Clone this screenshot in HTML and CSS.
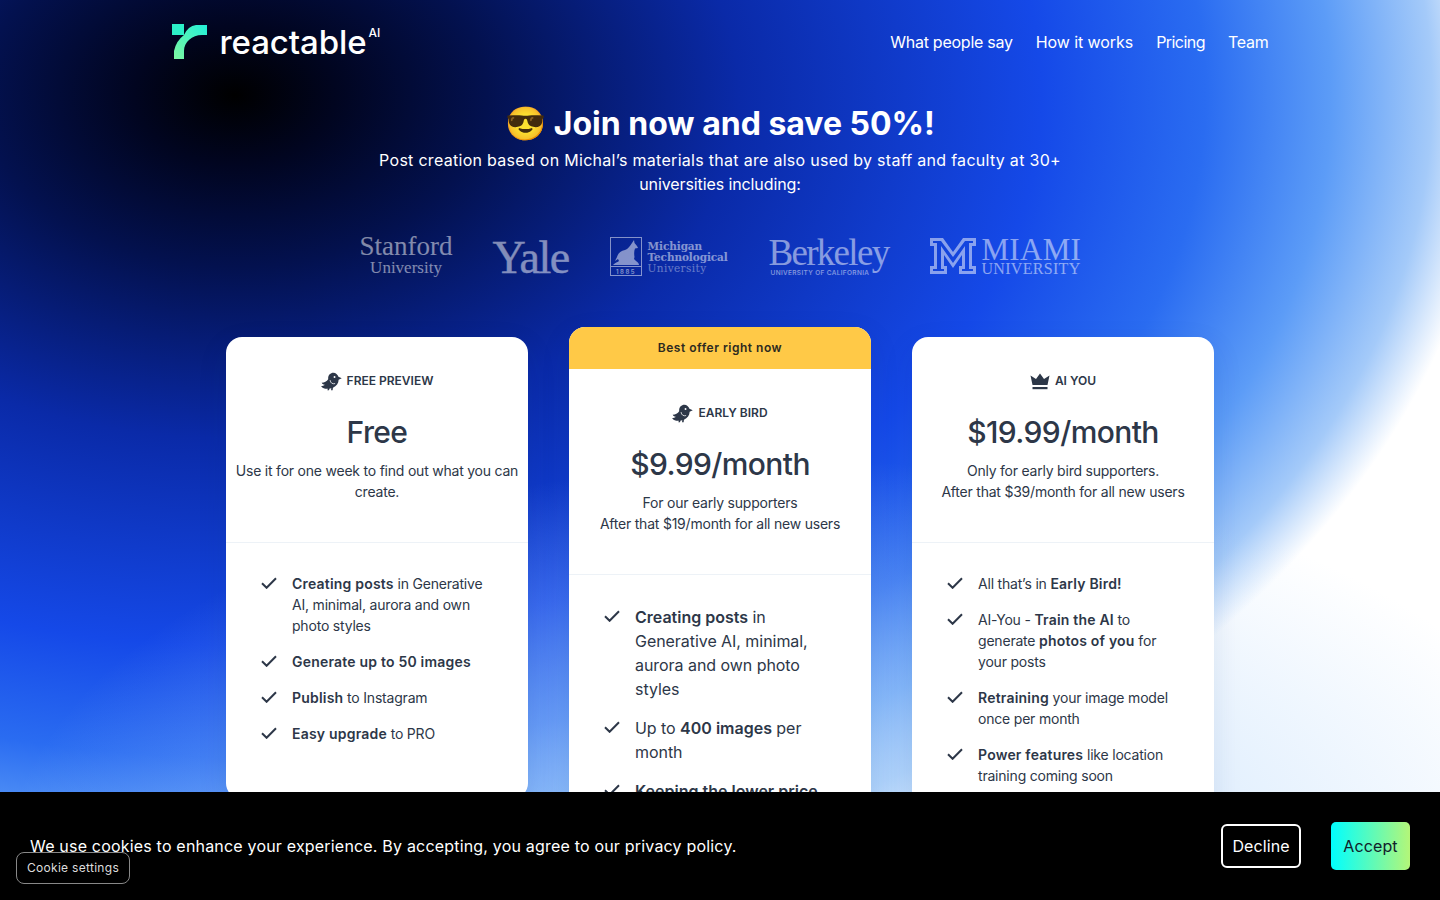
FILE: index.html
```html
<!DOCTYPE html>
<html lang="en">
<head>
<meta charset="utf-8">
<title>reactable AI</title>
<link rel="stylesheet" href="styles.css">
</head>
<body>
<svg class="defs" width="0" height="0" aria-hidden="true">
  <defs>
    <linearGradient id="logoGrad" x1="0" y1="1" x2="1" y2="0">
      <stop offset="0" stop-color="#7df7a0"/>
      <stop offset="1" stop-color="#22f0d8"/>
    </linearGradient>
    <symbol id="bird" viewBox="0 0 22 20">
      <path d="M21.800 6.600 18.300 5C17.600 2.600 15.400 .8 13 .8 9.900 .8 7.500 3.300 7.500 6.300V7.500C6 10 3.200 11.300 .6 11.200 1.500 12.600 2.800 13.300 4.200 13.500 3 14.500 1.500 15 0 15 1.800 17.200 4.500 18 7.200 17.700L6.600 19.200H8.300L9 17.400 10.800 17.100 10.500 19.200H12.200L12.500 16.500C16.200 15 18.500 12 18.500 8.200Z"/>
      <path d="M9.500 8.500C9.800 11.500 12 13 14.800 12.200" fill="none" stroke="#fff" stroke-width=".8"/>
      <circle cx="14.200" cy="5.200" r="1" fill="#fff"/>
    </symbol>
    <symbol id="crown" viewBox="0 0 20 17">
      <path d="M10 .5 14 6 19.500 2.500 17.500 12H2.500L.5 2.500 6 6 10 .5Z"/>
      <rect x="2.500" y="14" width="15" height="2.200"/>
    </symbol>
    <symbol id="check" viewBox="0 0 16 12">
      <path d="M1 6.200 5.600 10.800 15 1.200" fill="none" stroke="currentColor" stroke-width="2"/>
    </symbol>
  </defs>
</svg>

<div class="page">
  <header class="topbar">
    <a class="brand" href="#">
      <svg class="brand-mark" viewBox="0 0 36 36" aria-hidden="true">
        <rect x="0" y="0" width="12" height="11" fill="#2cf0c8"/>
        <path d="M35 1H24Q16 2 12 11 4 17 2 27V35H12V27C12 18 20 11 30 11H35Z" fill="url(#logoGrad)"/>
      </svg>
      <span class="brand-name">reactable</span><sup class="brand-ai">AI</sup>
    </a>
    <nav class="nav">
      <a href="#">What people say</a>
      <a href="#">How it works</a>
      <a href="#">Pricing</a>
      <a href="#">Team</a>
    </nav>
  </header>

  <section class="hero">
    <h1><span class="emoji">😎</span> Join now and save 50%!</h1>
    <p>Post creation based on Michal’s materials that are also used by staff and faculty at 30+ <span class="sub-end">universities including:</span></p>
  </section>

  <section class="unis">
    <div class="uni stanford"><span class="s1">Stanford</span><span class="s2">University</span></div>
    <div class="uni yale">Yale</div>
    <div class="uni mtu">
      <svg class="mtu-mark" viewBox="0 0 32 39" aria-hidden="true">
        <rect x=".5" y=".5" width="31" height="38" fill="none" stroke="currentColor"/>
        <line x1=".5" y1="29.500" x2="31.500" y2="29.500" stroke="currentColor"/>
        <path d="M3 28C6 25 8 25 9 24L8 22 5 24 7 20C8 16 11 14 15 13 18 12 20 9 22 6L24 3 24.500 6 27 9 28 11 25 11.500C24 14 24 17 24.500 20L24 22 26 24C28 25 29 27 29 28Z" fill="currentColor"/>
        <text class="mtu-year" x="16" y="36.500" text-anchor="middle" fill="currentColor">1885</text>
      </svg>
      <div class="mtu-text"><span class="m1">Michigan</span><span class="m1">Technological</span><span class="m2">University</span></div>
    </div>
    <div class="uni berkeley"><span class="b1">Berkeley</span><span class="b2">UNIVERSITY OF CALIFORNIA</span></div>
    <div class="uni miami">
      <svg class="miami-mark" viewBox="0 0 46 36" aria-hidden="true">
        <path fill-rule="evenodd" d="M0 0H13L23 14 33 0H46V8H42V28H46V36H29V28H32V17L23 30 14 17V28H17V36H0V28H4V8H0ZM3 3V5H7V31H3V33H14V31H11V8L23 25 35 8V31H32V33H43V31H39V5H43V3H35L23 19 11 3Z"/>
      </svg>
      <div class="miami-text"><span class="mi1">MIAMI</span><span class="mi2">UNIVERSITY</span></div>
    </div>
  </section>

  <section class="plans">
    <article class="card card-side card-free">
      <div class="card-head">
        <div class="tier"><svg class="tier-icon"><use href="#bird"/></svg>FREE PREVIEW</div>
        <h2>Free</h2>
        <p>Use it for one week to find out what you can create.</p>
      </div>
      <ul class="features">
        <li><svg class="tick"><use href="#check"/></svg><span><b>Creating posts</b> in Generative AI, minimal, aurora and own photo styles</span></li>
        <li><svg class="tick"><use href="#check"/></svg><span><b>Generate up to 50 images</b></span></li>
        <li><svg class="tick"><use href="#check"/></svg><span><b>Publish</b> to Instagram</span></li>
        <li><svg class="tick"><use href="#check"/></svg><span><b>Easy upgrade</b> to PRO</span></li>
      </ul>
    </article>

    <article class="card card-main">
      <div class="ribbon">Best offer right now</div>
      <div class="card-head">
        <div class="tier"><svg class="tier-icon"><use href="#bird"/></svg>EARLY BIRD</div>
        <h2>$9.99/month</h2>
        <p>For our early supporters<br>After that $19/month for all new users</p>
      </div>
      <ul class="features features-lg">
        <li><svg class="tick"><use href="#check"/></svg><span><b>Creating posts</b> in Generative AI, minimal, aurora and own photo styles</span></li>
        <li><svg class="tick"><use href="#check"/></svg><span>Up to <b>400 images</b> per month</span></li>
        <li><svg class="tick"><use href="#check"/></svg><span><b>Keeping the lower price</b> for all future months</span></li>
      </ul>
    </article>

    <article class="card card-side">
      <div class="card-head">
        <div class="tier"><svg class="tier-icon crown"><use href="#crown"/></svg>AI YOU</div>
        <h2>$19.99/month</h2>
        <p>Only for early bird supporters.<br>After that $39/month for all new users</p>
      </div>
      <ul class="features">
        <li><svg class="tick"><use href="#check"/></svg><span>All that’s in <b>Early Bird!</b></span></li>
        <li><svg class="tick"><use href="#check"/></svg><span>AI-You - <b>Train the AI</b> to generate <b>photos of you</b> for your posts</span></li>
        <li><svg class="tick"><use href="#check"/></svg><span><b>Retraining</b> your image model once per month</span></li>
        <li><svg class="tick"><use href="#check"/></svg><span><b>Power features</b> like location training coming soon</span></li>
      </ul>
    </article>
  </section>
</div>

<aside class="cookie">
  <p>We use cookies to enhance your experience. By accepting, you agree to our privacy policy.</p>
  <div class="cookie-actions">
    <button class="btn-decline">Decline</button>
    <button class="btn-accept">Accept</button>
  </div>
</aside>
<button class="cookie-settings">Cookie settings</button>
</body>
</html>
```
FILE: styles.css
```css
* { box-sizing: border-box; }
html, body { margin: 0; height: 900px; overflow: hidden; }
body {
  font-family: Inter, "Noto Sans", sans-serif;
  color: #2d3748;
  background:
    radial-gradient(ellipse 800px 420px at 800px 880px, rgba(180, 215, 252, .85), rgba(120, 175, 250, 0)),
    radial-gradient(ellipse 1260px 860px at 235px 95px,
      #000 0, #010520 8%, #03114f 20%, #0a2aa8 40%, #1549e8 64%, #2a6cf1 77%, #5c9cf7 87%, #a4caf9 95%, #fff 100%);
}
a { color: inherit; text-decoration: none; }
.defs { position: absolute; }
.page { height: 900px; overflow: hidden; }

.topbar {
  width: 1097px; height: 84px; margin: 0 auto;
  display: flex; align-items: center; justify-content: space-between;
}
.brand { display: flex; align-items: center; color: #fff; }
.brand-mark { width: 36px; height: 36px; margin-right: 12px; }
.brand-name { font-size: 33px; font-weight: 500; letter-spacing: -.1px; line-height: 40px; }
.brand-ai { font-size: 12px; font-weight: 500; align-self: flex-start; margin: 4px 0 0 2px; line-height: 14px; }
.nav { display: flex; gap: 23px; color: #fff; font-size: 16px; line-height: 24px; letter-spacing: -.25px; }
.nav a:nth-child(2) { letter-spacing: -.08px; }
.nav a:nth-child(3) { letter-spacing: -.55px; }

.hero { text-align: center; color: #fff; padding-top: 19px; }
.hero h1 { margin: 0; font-size: 32px; font-weight: 700; line-height: 42px; }
.hero .emoji { font-size: 33px; font-family: "Noto Color Emoji", Inter, sans-serif; }
.hero p { width: 700px; margin: 3px auto 0; font-size: 16px; line-height: 24px; letter-spacing: .29px; }
.sub-end { letter-spacing: -.1px; }

.unis {
  display: flex; align-items: center; justify-content: center; gap: 40px;
  height: 60px; margin-top: 30px; color: #fff;
}
.uni { opacity: .5; font-family: "Liberation Serif", serif; display: flex; flex: none; }
.stanford { flex-direction: column; align-items: center; width: 93px; }
.s1 { font-size: 27px; line-height: 24px; }
.s2 { font-size: 17px; line-height: 20px; }
.yale { width: 77px; padding-top: 3px; font-size: 46px; line-height: 48px; letter-spacing: -1.500px; -webkit-text-stroke: .4px #fff; white-space: nowrap; }
.mtu { gap: 6px; align-items: center; width: 119px; }
.mtu-mark { width: 32px; height: 39px; flex: none; }
.mtu-year { font: 600 6px Inter, sans-serif; letter-spacing: 1.500px; }
.mtu-text { display: flex; flex-direction: column; font-family: "DejaVu Serif", serif; font-size: 10.500px; line-height: 11px; padding-top: 2px; }
.m1 { font-weight: 700; white-space: nowrap; letter-spacing: -.1px; }
.m2 { opacity: .75; letter-spacing: .4px; }
.berkeley { flex-direction: column; width: 121px; }
.b1 { font-size: 37px; line-height: 33px; letter-spacing: -1.700px; white-space: nowrap; }
.b2 { font-family: Inter, sans-serif; font-size: 6.500px; line-height: 8px; font-weight: 500; letter-spacing: .35px; white-space: nowrap; padding-left: 2px; }
.miami { gap: 6px; align-items: center; width: 151px; }
.miami-mark { width: 46px; height: 36px; fill: currentColor; flex: none; }
.miami-text { display: flex; flex-direction: column; }
.mi1 { font-size: 31px; line-height: 25px; letter-spacing: .3px; }
.mi2 { font-size: 16px; line-height: 14px; letter-spacing: .3px; white-space: nowrap; }

.plans {
  display: flex; justify-content: center; align-items: flex-start; gap: 41px;
  margin-top: 41px;
}
.card {
  width: 302px; background: #fff; border-radius: 16px; overflow: hidden;
  box-shadow: 0 10px 30px rgba(20, 50, 120, .10);
}
.card-side { margin-top: 10px; }
.card-free { height: 462px; }
.ribbon {
  height: 42px; background: #ffc947; color: #2d2a20;
  font-size: 12px; font-weight: 600; letter-spacing: .5px; line-height: 42px; text-align: center;
}
.card-head {
  height: 206px; padding: 32px 8px 0; text-align: center;
  border-bottom: 1px solid #edf2f7;
}
.tier {
  display: flex; align-items: center; justify-content: center; gap: 5px;
  height: 24px; font-size: 12px; font-weight: 600; line-height: 24px;
}
.tier-icon { width: 21px; height: 19px; fill: #2d3748; }
.tier-icon.crown { width: 20px; height: 17px; }
.card-head h2 { margin: 19px 0 0; font-size: 30px; font-weight: 500; line-height: 40px; letter-spacing: -.6px; }
.card-head p { margin: 8px 0 0; font-size: 14px; line-height: 21px; letter-spacing: -.22px; }

.features { list-style: none; margin: 0; padding: 30px 32px 40px 35px; display: flex; flex-direction: column; gap: 15px; font-size: 14px; line-height: 21px; letter-spacing: -.2px; }
.features li { display: flex; gap: 15px; }
.features b { font-weight: 600; letter-spacing: .2px; }
.tick { flex: none; width: 16px; height: 12px; margin-top: 4px; color: #2d3748; }
.features-lg { font-size: 16px; line-height: 24px; letter-spacing: -.05px; }
.features-lg b { letter-spacing: 0; }
.features-lg .tick { margin-top: 5px; }

.cookie {
  position: fixed; left: 0; right: 0; bottom: 0; height: 108px;
  background: #000; color: #fff; padding: 0 30px;
  display: flex; align-items: center; justify-content: space-between;
}
.cookie p { margin: 0; font-size: 16px; line-height: 24px; letter-spacing: .19px; }
.cookie-actions { display: flex; align-items: center; gap: 30px; }
.btn-decline, .btn-accept { font: 400 16px/24px Inter, sans-serif; letter-spacing: .1px; cursor: pointer; }
.btn-decline { width: 80px; height: 44px; padding: 0; background: #000; color: #fff; border: 2px solid #fff; border-radius: 6px; }
.btn-accept { width: 79px; height: 48px; padding: 0; color: #10202a; border: 0; border-radius: 5px; background: linear-gradient(90deg, #0ff, #b4f678); }
.cookie-settings {
  position: fixed; left: 16px; bottom: 16px; width: 114px; height: 32px; padding: 0;
  background: #000; color: #ddd; border: 1px solid #888; border-radius: 8px;
  font: 400 12px/20px Inter, sans-serif; letter-spacing: .3px; cursor: pointer;
}
```
